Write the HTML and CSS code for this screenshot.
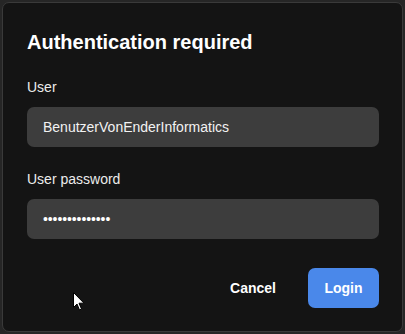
FILE: index.html
```html
<!DOCTYPE html>
<html>
<head>
<meta charset="utf-8">
<link rel="stylesheet" href="styles.css">
</head>
<body>
<div class="dialog">
  <h1 class="title">Authentication required</h1>
  <div class="field">
    <label class="label">User</label>
    <div class="input">BenutzerVonEnderInformatics</div>
  </div>
  <div class="field">
    <label class="label">User password</label>
    <div class="input dots">••••••••••••••</div>
  </div>
  <div class="actions">
    <button class="btn cancel">Cancel</button>
    <button class="btn login">Login</button>
  </div>
  <svg class="cursor" width="12" height="19" viewBox="0 0 12 19">
    <path d="M0.5 0.5 L0.5 15.5 L4 12 L6.5 18 L8.5 17 L6 11.2 L11 11.2 Z" fill="#fff" stroke="#000" stroke-width="1"/>
  </svg>
</div>
</body>
</html>
```
FILE: styles.css
```css
html, body {
  margin: 0;
  padding: 0;
  background: #262626;
  width: 405px;
  height: 334px;
  overflow: hidden;
}
body {
  padding: 2px;
  box-sizing: border-box;
  font-family: "Liberation Sans", Arial, sans-serif;
}
.dialog {
  position: relative;
  box-sizing: border-box;
  width: 401px;
  height: 330px;
  background: #141414;
  border: 1px solid #3a3a3a;
  border-radius: 7px;
  padding: 27px 23px 0 24px;
  color: #fff;
}
.title {
  margin: 0 0 25px 0;
  font-size: 20px;
  font-weight: bold;
  line-height: 24px;
  color: #fff;
}
.field {
  display: flex;
  flex-direction: column;
  margin-bottom: 24px;
}
.label {
  font-size: 14px;
  line-height: 16px;
  color: #ececec;
  margin-bottom: 12px;
}
.input {
  height: 40px;
  background: #3d3d3d;
  border-radius: 7px;
  box-sizing: border-box;
  padding: 0 16px;
  display: flex;
  align-items: center;
  font-size: 14px;
  color: #f2f2f2;
}
.dots {
  font-size: 14px;
  letter-spacing: -0.1px;
  color: #fff;
}
.actions {
  display: flex;
  justify-content: flex-end;
  align-items: center;
  gap: 16px;
  margin-top: 29px;
}
.btn {
  font-family: "Liberation Sans", Arial, sans-serif;
  font-size: 14px;
  font-weight: bold;
  color: #fff;
  border: none;
  height: 40px;
  border-radius: 7px;
  cursor: pointer;
}
.cancel {
  background: transparent;
  padding: 0 16px;
}
.login {
  background: #4a88ea;
  width: 71px;
  padding: 0;
}
.cursor {
  position: absolute;
  left: 70px;
  top: 289px;
}
```
